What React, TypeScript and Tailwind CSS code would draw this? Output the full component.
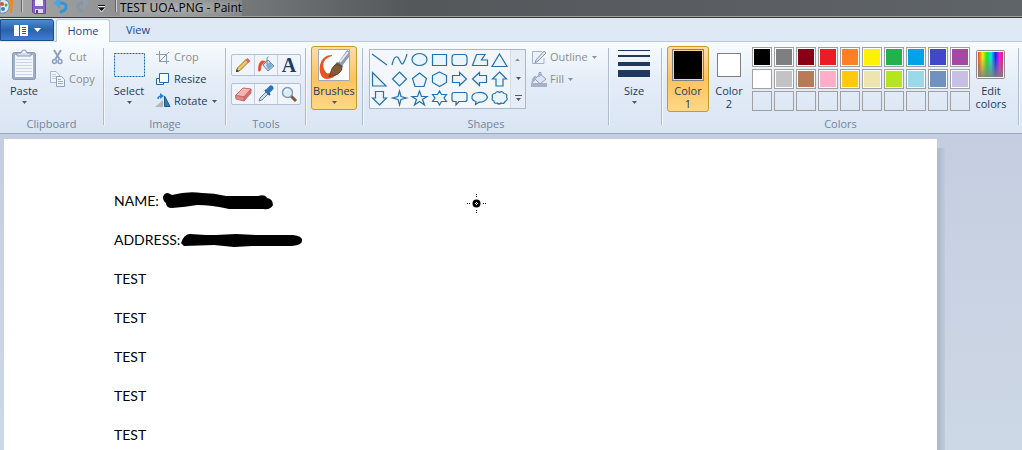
import type { ReactNode } from "react";
import clsx from "clsx";

const paletteRows: string[][] = [
  [
    "bg-[#000000]",
    "bg-[#7f7f7f]",
    "bg-[#880015]",
    "bg-[#ed1c24]",
    "bg-[#ff7f27]",
    "bg-[#fff200]",
    "bg-[#22b14c]",
    "bg-[#00a2e8]",
    "bg-[#3f48cc]",
    "bg-[#a349a4]",
  ],
  [
    "bg-[#ffffff]",
    "bg-[#c3c3c3]",
    "bg-[#b97a57]",
    "bg-[#ffaec9]",
    "bg-[#ffc90e]",
    "bg-[#efe4b0]",
    "bg-[#b5e61d]",
    "bg-[#99d9ea]",
    "bg-[#7092be]",
    "bg-[#c8bfe7]",
  ],
  Array(10).fill(""),
];

const shapes: { name: string; d: string }[] = [
  { name: "Line", d: "M2 3 17 14" },
  { name: "Curve", d: "M2 14C4 5 7 4 9 8S12 15 14 11 16 6 17 3" },
  { name: "Oval", d: "M2 8.5A7.5 6 0 0 1 17 8.5 7.5 6 0 0 1 2 8.5Z" },
  { name: "Rectangle", d: "M2.5 3.5H16.5V14.5H2.5Z" },
  { name: "Rounded rectangle", d: "M5 3.5H14Q17 3.5 17 6.5V11.5Q17 14.5 14 14.5H5Q2 14.5 2 11.5V6.5Q2 3.5 5 3.5Z" },
  { name: "Polygon", d: "M6.5 3.5H15L11.5 9H17.5V14.5H2.5Z" },
  { name: "Triangle", d: "M9.5 3 17 15.5H2Z" },
  { name: "Right triangle", d: "M2.5 2.5V16H16Z" },
  { name: "Diamond", d: "M9.5 2 16.5 9 9.5 16 2.5 9Z" },
  { name: "Pentagon", d: "M9.5 3 16.5 8.5 14 16.5H5L2.5 8.5Z" },
  { name: "Hexagon", d: "M9.5 2 16.5 5.5V12.5L9.5 16.5 2.5 12.5V5.5Z" },
  { name: "Right arrow", d: "M2.5 5.5H9.5V2.5L16.5 9 9.5 15.5V12.5H2.5Z" },
  { name: "Left arrow", d: "M16.5 5.5H9.5V2.5L2.5 9 9.5 15.5V12.5H16.5Z" },
  { name: "Up arrow", d: "M9.5 2 16.5 9H13V16H6V9H2.5Z" },
  { name: "Down arrow", d: "M9.5 16 16.5 9H13.5V2.5H5.5V9H2.5Z" },
  { name: "Four-point star", d: "M9.5 2 11 7.5 16.5 9 11 10.5 9.5 16 8 10.5 2.5 9 8 7.5Z" },
  { name: "Five-point star", d: "M9.5 2 11.5 7.5H17L12.5 10.5 14.5 16 9.5 12.5 4.5 16 6.5 10.5 2 7.5H7.5Z" },
  { name: "Six-point star", d: "M9.5 2 11.5 5.5H16.5L14 9 16.5 12.5H11.5L9.5 16 7.5 12.5H2.5L5 9 2.5 5.5H7.5Z" },
  { name: "Rounded callout", d: "M4 3.5H15Q17 3.5 17 5.5V10.5Q17 12.5 15 12.5H9L6 16V12.5H4Q2 12.5 2 10.5V5.5Q2 3.5 4 3.5Z" },
  { name: "Oval callout", d: "M6 12.5C0 11 .5 4 8.5 3.5S18 7.5 17 9.5 12 13.5 9.5 13L5.5 15.5Z" },
  { name: "Cloud callout", d: "M5 4.5Q7 1.5 9.5 3.5 12.5 1.5 14 4.5 18 5 16.5 8 18.5 11 15 12.5 14 15.5 11 14 9 16 7 14 4 15 4 12 1 11 2.5 8.5 1 5 5 4.5Z" },
];

function Arrow({ muted = false }: { muted?: boolean }) {
  return (
    <svg className={clsx("h-[3px] w-[5px] shrink-0", muted ? "text-[#8d929b]" : "text-[#4a5a73]")} viewBox="0 0 5 3" fill="currentColor">
      <path d="M0 0h5L2.5 3z" />
    </svg>
  );
}

function Group({ label, className, children }: { label?: string; className: string; children: ReactNode }) {
  return (
    <>
      <section className={clsx("flex shrink-0 flex-col", className)} aria-label={label}>
        <div className="flex h-[70px] shrink-0 items-start">{children}</div>
        {label && <h2 className="text-center leading-4 text-[#76839b]">{label}</h2>}
      </section>
      <div className="mt-[2px] h-[77px] w-[2px] shrink-0 border-l border-[#adbacf] bg-[#f4f8fd]" />
    </>
  );
}

interface LargeButtonProps {
  label: string;
  icon: ReactNode;
  className: string;
  active?: boolean;
  arrow?: boolean;
}

function LargeButton({ label, icon, className, active, arrow = true }: LargeButtonProps) {
  return (
    <button
      className={clsx(
        "flex shrink-0 flex-col items-center rounded-[3px] border pt-[2px] leading-[13px]",
        active
          ? "border-[#c29b29] bg-linear-to-b from-[#fbdcaa] from-0% via-[#fdc35c] via-50% to-[#fed787] to-100%"
          : "border-transparent",
        className
      )}
    >
      <span className="flex h-8 items-center justify-center">{icon}</span>
      <span className="mt-[3px] block text-center whitespace-pre-line">{label}</span>
      {arrow && (
        <span className="mt-1">
          <Arrow />
        </span>
      )}
    </button>
  );
}

function SmallButton({ label, icon, muted, arrow }: { label: string; icon: ReactNode; muted?: boolean; arrow?: boolean }) {
  return (
    <button className={clsx("flex h-[22px] items-center gap-[3px]", muted && "text-[#8d8d8d]")} disabled={muted}>
      <svg className="size-4 shrink-0" viewBox="0 0 16 16" fill="none">
        {icon}
      </svg>
      <span>{label}</span>
      {arrow && (
        <span className="flex pl-[1px]">
          <Arrow muted={muted} />
        </span>
      )}
    </button>
  );
}

function ToolButton({ name, children }: { name: string; children: ReactNode }) {
  return (
    <button aria-label={name} className="flex flex-1 items-center justify-center border-r border-[#c5d0e0] last:border-r-0">
      <svg className="size-[18px]" viewBox="0 0 18 18" fill="none">
        {children}
      </svg>
    </button>
  );
}

function TitleBar() {
  return (
    <header className="flex h-[18px] shrink-0 items-start border-b border-[#30363d] bg-linear-to-r from-[#a9a9a9] from-0% via-[#54585b] via-40% to-[#5f6468] to-100% shadow-[inset_0_-1px_0_#a39f9f]">
      <svg className="h-[17px] w-[120px] shrink-0" viewBox="0 0 120 17" fill="none">
        <path d="M0 0C6-2 10 2 9 7 9 11 5 14 0 13Z" fill="#dceaf3" stroke="#5d87a5" />
        <circle cx="2" cy="4" r="2" fill="#e34b36" />
        <circle cx="6" cy="5" r="1.5" fill="#50a83c" />
        <circle cx="3" cy="9" r="2" fill="#3482c7" />
        <path d="M10 0h3v4l-1 9h-2L9 4z" fill="#e78a2c" />
        <path d="M22.5 0v12M116.5 0v12" stroke="#d0d0d0" />
        <path d="M21.5 0v12M115.5 0v12" stroke="#646464" />
        <path d="M32.5 0H45.5V13.5H34L32.5 12Z" fill="#8560c8" stroke="#6845a6" />
        <path d="M35 0h8v6h-8z" fill="#f5f3fa" />
        <path d="M35 9h8v4h-8z" fill="#dcd5ec" />
        <path d="M36 10h2v3h-2z" fill="#57409a" />
        <path d="M59 3H61Q67 3 66 8 65 11 60 12" stroke="#2f94da" strokeWidth="3" />
        <path d="M54 3 60-3V9Z" fill="#42a8ea" />
        <path d="M84 3H82Q77 4 78 8 79 11 83 12" stroke="#8795ab" strokeWidth="3" />
        <path d="M89 3 83-3V9Z" fill="#8f9db1" />
        <path d="M98 6.5h7M98 8l3.5 4L105 8" stroke="#eee" />
        <path d="M98 5.5h7" stroke="#111" />
        <path d="M98 7.5h7L101.5 11z" fill="#111" />
      </svg>
      <h1 className="bg-radial from-white/35 to-white/10 text-[12px] leading-4 text-black">TEST UOA.PNG - Paint</h1>
    </header>
  );
}

function Tabs() {
  return (
    <nav className="flex h-6 shrink-0 items-end bg-[#dfe9f5] pt-px">
      <button
        aria-label="Paint menu"
        className="mb-px flex h-[22px] w-[54px] items-center justify-center gap-[6px] rounded-tr-[3px] border border-[#1d4c92] bg-linear-to-b from-[#4c8bd0] from-0% via-[#2b61ae] via-50% to-[#3f7fd0] to-100%"
      >
        <svg className="h-[11px] w-[14px]" viewBox="0 0 14 11" fill="none">
          <path d="M0 0h14v11H0z" fill="#fff" />
          <path d="M5.5 0v11M8 2.5h4M8 4.5h4M8 6.5h4M8 8.5h4" stroke="#2b5da6" />
        </svg>
        <svg className="h-1 w-[7px]" viewBox="0 0 7 4" fill="#fff">
          <path d="M0 0h7L3.5 4z" />
        </svg>
      </button>
      <div className="h-full w-[2px] border-b border-[#bac9db]" />
      <button className="h-full w-[54px] rounded-t-[3px] border border-b-0 border-[#bac9db] bg-[#fafdff] text-[#1e4687]">
        Home
      </button>
      <div className="flex h-full flex-1 border-b border-[#bac9db]">
        <button className="w-14 text-[#1e4687]">View</button>
      </div>
    </nav>
  );
}

function Ribbon() {
  return (
    <div className="flex h-[92px] shrink-0 overflow-hidden border-b border-[#9aa9c2] bg-linear-to-b from-[#f8fcff] from-0% via-[#e3ecf7] via-45% to-[#dae5f4] to-100% pt-1">
      <Group label="Clipboard" className="w-[103px]">
        <LargeButton
          label="Paste"
          className="mr-[2px] w-12"
          icon={
            <svg className="h-8 w-[26px]" viewBox="0 0 26 32" fill="none">
              <rect x="1.5" y="3.5" width="23" height="27" rx="2" fill="#9fb0cb" stroke="#8799b8" />
              <path d="M4 6h18v22H4z" fill="#f3f6fb" />
              <path d="M5 10.5h16M5 13.5h16M5 16.5h16M5 19.5h16M5 22.5h16M5 25.5h16" stroke="#cbd5e5" />
              <path d="M6 7V4h4c0-4 6-4 6 0h4v3z" fill="#d7dfeb" stroke="#8799b8" />
              <circle cx="13" cy="3" r="1" fill="#fff" />
            </svg>
          }
        />
        <div className="flex flex-col">
          <SmallButton
            label="Cut"
            muted
            icon={
              <>
                <path d="M4 1 9.5 10M11 1 5.5 10" stroke="#8ea0be" strokeWidth="2" />
                <circle cx="4.5" cy="12.5" r="2" stroke="#8ea0be" strokeWidth="1.5" />
                <circle cx="10" cy="12.5" r="2" stroke="#8ea0be" strokeWidth="1.5" />
              </>
            }
          />
          <SmallButton
            label="Copy"
            muted
            icon={
              <>
                <path d="M.5.5H6L9.5 4V11.5H.5Z" fill="#f2f5fa" stroke="#a6b4cc" />
                <path d="M2 3.5h4M2 5.5h5M2 7.5h5" stroke="#c0cbdc" />
                <path d="M6.5 5.5H11.5L14.5 8.5V15.5H6.5Z" fill="#f2f5fa" stroke="#8ea0be" />
                <path d="M8 8.5h3M8 10.5h5M8 12.5h5" stroke="#9cacc7" />
              </>
            }
          />
        </div>
      </Group>

      <Group label="Image" className="w-[120px]">
        <LargeButton
          label="Select"
          className="mr-[2px] w-12"
          icon={
            <svg className="h-6 w-[31px]" viewBox="0 0 31 24" fill="none">
              <path d="M.5.5H30.5V23.5H.5Z" fill="#e3edf8" stroke="#1b66ac" strokeDasharray="2 1" />
            </svg>
          }
        />
        <div className="flex flex-col">
          <SmallButton
            label="Crop"
            muted
            icon={<path d="M4.5 2V12.5H14M1 5.5H11.5V15M4 13 14 3" stroke="#8c9cb8" />}
          />
          <SmallButton
            label="Resize"
            icon={
              <>
                <path d="M1.5 7.5H8.5V13.5H1.5Z" fill="#fff" stroke="#1e69ad" />
                <path d="M4.5 2.5H13.5V11.5H4.5Z" fill="#f5faff" stroke="#1e69ad" />
              </>
            }
          />
          <SmallButton
            label="Rotate"
            arrow
            icon={
              <>
                <path d="M0 14 8 7V14Z" fill="#b3b7bc" />
                <path d="M9.5 3 15 13.5H9.5Z" fill="#2c80bd" stroke="#1d5789" />
                <path d="M3 6Q3 3 7 3" stroke="#2c80d8" strokeWidth="1.5" />
                <path d="M5 0 9 3 5 6Z" fill="#2c80d8" />
              </>
            }
          />
        </div>
      </Group>

      <Group label="Tools" className="w-[78px]">
        <div className="flex flex-1 flex-col gap-[7px] px-1 pt-2">
          <div className="flex h-[22px] rounded-[2px] border border-[#b3c0d4] bg-[#f0f5fb]">
            <ToolButton name="Pencil">
              <path d="m2.5 15.5 1-3.5L12 3.5l2.5 2.5L6 14.5z" fill="#f3c95c" stroke="#8c713a" />
              <path d="m11.5 4 2-2 3 3-2 2z" fill="#dd6565" />
              <path d="m2 16 .5-3 2.500 2.500z" fill="#333" />
            </ToolButton>
            <ToolButton name="Fill with color">
              <path d="M6 9 11 4 17 10 11 15Z" fill="#d4e3f1" stroke="#6684a5" />
              <path d="M9 9 13 6 16 10 11 14Z" fill="#81add5" />
              <path d="M10 8V2.5Q10 1 11.5 1" stroke="#6684a5" />
              <path d="M1 14Q1 6 5 4.5L9 5 6 8Q4 9 4 14L2 16Z" fill="#e6522d" />
            </ToolButton>
            <button className="flex flex-1 items-center justify-center font-[Liberation_Serif,serif] text-[20px] leading-5 font-bold text-[#1d3c67]">
              A
            </button>
          </div>
          <div className="flex h-[22px] rounded-[2px] border border-[#b3c0d4] bg-[#f0f5fb]">
            <ToolButton name="Eraser">
              <path d="M1.5 10.5 9 3 17 4 10 12Z" fill="#f5b3b1" stroke="#c56b6b" />
              <path d="M1.5 10.5 10 12V16L2 14Z" fill="#e98684" stroke="#c56b6b" />
              <path d="M10 12 17 4V8L10 16Z" fill="#d66f71" stroke="#c56b6b" />
            </ToolButton>
            <ToolButton name="Color picker">
              <path d="m2 16 1-3 7-7 2 2-7 7z" fill="#c9dcec" stroke="#6d87a0" />
              <path d="m8 5 5 5" stroke="#245795" strokeWidth="2" />
              <path d="m11 6 3-3" stroke="#2c72b8" strokeWidth="5" strokeLinecap="round" />
            </ToolButton>
            <ToolButton name="Magnifier">
              <path d="m11 11 5 5" stroke="#80573f" strokeWidth="3" />
              <circle cx="7.5" cy="7.5" r="5" fill="#d9edfa" stroke="#8999aa" strokeWidth="1.5" />
              <path d="M5 7q0-2 3-3" stroke="#fff" />
            </ToolButton>
          </div>
        </div>
      </Group>

      <Group className="w-[55px]">
        <LargeButton
          label="Brushes"
          active
          className="ml-1 h-16 w-[46px]"
          icon={
            <svg className="size-8" viewBox="0 0 32 32" fill="none">
              <path d="M.5.5h31v31H.5z" fill="#fff" stroke="#a0a8b1" />
              <path d="M14 6C2 6 0 19 3 26 5 32 15 31 20 24L16 19C13 25 9 26 7 22 3 15 6 9 14 7Z" fill="#e95325" />
              <path d="m20 14 9-13 2 1V8l-7 9z" fill="#8e9eb0" />
              <path d="m22 13 8-10" stroke="#e6ebf0" strokeWidth="2" />
              <path d="m19 13 6 4-2 4-7-4z" fill="#56616f" />
              <path d="M17 16C23 15 26 19 22 23 19 27 14 26 11 28 13 24 13 19 17 16Z" fill="#855a37" stroke="#604025" />
            </svg>
          }
        />
      </Group>

      <Group label="Shapes" className="w-[244px]">
        <div className="mt-[3px] mr-[5px] ml-[5px] flex h-[60px] w-[157px] shrink-0 border border-[#a9b8ce] bg-[#f3f6fb]">
          <div className="grid flex-1 grid-cols-7 grid-rows-3">
            {shapes.map(({ name, d }) => (
              <button key={name} aria-label={name}>
                <svg className="h-[18px] w-[19px]" viewBox="0 0 19 18" fill="none">
                  <path
                    d={d}
                    fill={name === "Line" || name === "Curve" ? "none" : "#e9f5fa"}
                    stroke="#2670ad"
                    strokeWidth="1.2"
                  />
                </svg>
              </button>
            ))}
          </div>
          <div className="flex w-[15px] flex-col border-l border-[#d3dcea] bg-[#e6edf7]">
            <button aria-label="Previous row" className="flex flex-1 rotate-180 items-center justify-center">
              <Arrow muted />
            </button>
            <button aria-label="Next row" className="flex flex-1 items-center justify-center">
              <Arrow />
            </button>
            <button aria-label="More shapes" className="flex flex-1 flex-col items-center justify-center gap-[2px]">
              <span className="h-px w-[7px] bg-[#4a5a73]" />
              <Arrow />
            </button>
          </div>
        </div>
        <div className="flex flex-col">
          <SmallButton
            label="Outline"
            muted
            arrow
            icon={
              <>
                <path d="M11 2.5H1.5V14.5H13V9" fill="#edf2f9" stroke="#a4b2ca" />
                <path d="M4 14 5 11 13 2 15 4 7 12Z" fill="#dce4ef" stroke="#8999b5" />
              </>
            }
          />
          <SmallButton
            label="Fill"
            muted
            arrow
            icon={
              <>
                <path d="M0 12h16v4H0z" fill="#a4b3cb" />
                <path d="M4 8 9 3 15 8 9 13Z" fill="#dce4ef" stroke="#8fa0bd" />
                <path d="M8 6V1.5h2V5" stroke="#8fa0bd" />
                <path d="M1 12Q1 6 5 5L4 9Z" fill="#a4b3cb" stroke="#a4b3cb" />
              </>
            }
          />
        </div>
      </Group>

      <Group className="w-[51px]">
        <LargeButton
          label="Size"
          className="w-12"
          icon={
            <svg className="size-8" viewBox="0 0 32 32" fill="#1e395b">
              <path d="M0 1h32v1H0zM0 6h32v2H0zM0 13h32v4H0zM0 21h32v7H0z" />
            </svg>
          }
        />
      </Group>

      <Group label="Colors" className="w-[355px]">
        <LargeButton
          label={"Color\n1"}
          active
          arrow={false}
          className="ml-1 h-[66px] w-[42px]"
          icon={<span className="size-8 border border-[#7f7f7f] bg-black outline-1 -outline-offset-2 outline-[#fbd69a]" />}
        />
        <LargeButton
          label={"Color\n2"}
          arrow={false}
          className="mr-[3px] h-[66px] w-10"
          icon={<span className="size-6 border border-[#7f7f7f] bg-white" />}
        />
        <div className="mt-px grid shrink-0 grid-cols-10 gap-[2px]">
          {paletteRows.flat().map((color, i) => (
            <button
              key={i}
              aria-label={`Palette color ${i + 1}`}
              className={clsx("size-5 border border-[#a0a0a0] p-px", color && "bg-white")}
            >
              <span className={clsx("block size-full", color)} />
            </button>
          ))}
        </div>
        <LargeButton
          label={"Edit\ncolors"}
          arrow={false}
          className="w-[42px]"
          icon={
            <svg className="size-[30px]" viewBox="0 0 30 30">
              <defs>
                <linearGradient id="hue">
                  <stop offset="0" stopColor="#ff3b1f" />
                  <stop offset=".18" stopColor="#f7ee13" />
                  <stop offset=".36" stopColor="#12e52d" />
                  <stop offset=".52" stopColor="#12e6ea" />
                  <stop offset=".7" stopColor="#2520f2" />
                  <stop offset=".86" stopColor="#ee1bee" />
                  <stop offset="1" stopColor="#f51b5c" />
                </linearGradient>
                <linearGradient id="fade" x2="0" y2="1">
                  <stop offset=".2" stopColor="#808080" stopOpacity="0" />
                  <stop offset="1" stopColor="#808080" stopOpacity=".9" />
                </linearGradient>
              </defs>
              <rect x=".5" y=".5" width="28" height="28" rx="1" fill="#f4f4f4" stroke="#8c8c8c" />
              <path d="M2 2h25v25H2z" fill="url(#hue)" />
              <path d="M2 2h25v25H2z" fill="url(#fade)" />
            </svg>
          }
        />
      </Group>
    </div>
  );
}

function Canvas() {
  return (
    <main className="flex flex-1 items-stretch bg-linear-to-b from-[#c5cee0] to-[#cdd8e6] pt-[5px] pl-1">
      <div className="relative w-11/12 bg-white pt-[42px] pl-[110px] font-[Lato,sans-serif] text-[14px] text-black">
        <p className="flex h-[39px] items-center gap-px">
          NAME:
          <svg className="h-5 w-[114px]" viewBox="-2 0 114 20">
            <path d="M1 6Q2 2 6 2L10 4Q25 0 40 2 52 2 64 5L96 5Q103 3 105 7 111 8 111 14 109 19 101 18L67 18Q50 14 35 14 24 16 10 17 4 17 4 12Q1 10 1 6Z" />
          </svg>
        </p>
        <p className="flex h-[39px] items-center gap-px">
          ADDRESS:
          <svg className="h-4 w-[122px]" viewBox="0 0 122 16">
            <path d="M0 11Q3 2 9 2L25 3 35 3 55 2 75 3 112 3Q122 4 121 9 121 13 111 14L71 14 53 15 33 13 3 14Z" />
          </svg>
        </p>
        {Array.from({ length: 5 }, (_, i) => (
          <p key={i} className="flex h-[39px] items-center">
            TEST
          </p>
        ))}
        <svg className="absolute top-[54px] left-[462px] size-5" viewBox="0 0 20 20" fill="none">
          <circle cx="10.5" cy="10.5" r="4" fill="#000" />
          <path d="M10.5 1v1M10.5 3v1M10.5 17v1M10.5 19v1M1 10.5h1M3 10.5h1M17 10.5h1M19 10.5h1" stroke="#000" />
          <path d="M9 10.5h1M11 10.5h1M10.5 9v1M10.5 11v1" stroke="#fff" />
        </svg>
      </div>
      <div className="mt-[9px] w-2 bg-linear-to-r from-[#aab6cb] to-[#c1cbdd]" />
    </main>
  );
}

export default function App() {
  return (
    <div className="flex h-screen flex-col overflow-hidden font-[Open_Sans,sans-serif] text-[11px] text-[#1e395b]">
      <TitleBar />
      <Tabs />
      <Ribbon />
      <Canvas />
    </div>
  );
}
